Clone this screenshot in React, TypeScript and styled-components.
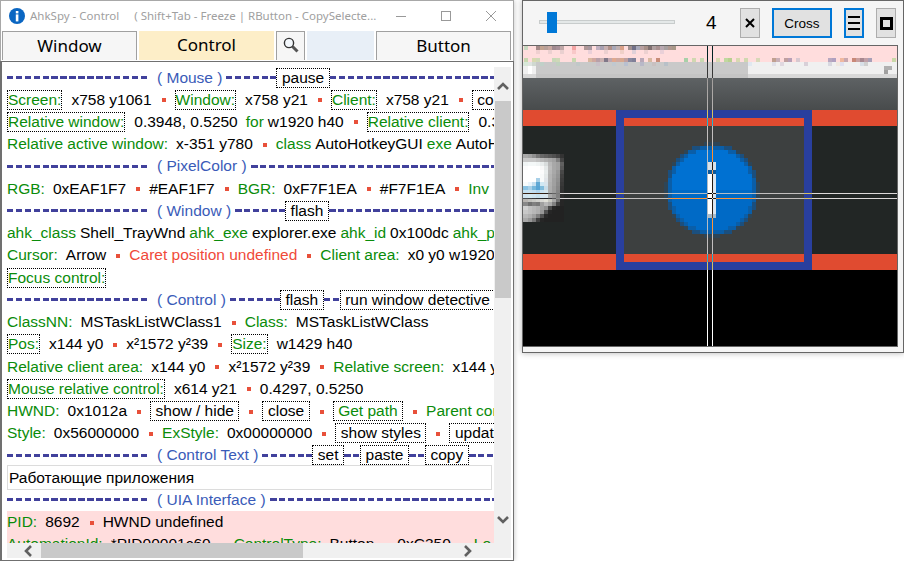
import React from 'react';
import styled, { createGlobalStyle } from 'styled-components';

const Global = createGlobalStyle`
  html, body { margin: 0; padding: 0; background: #fff; }
  body { width: 904px; height: 561px; overflow: hidden; }
  * { box-sizing: border-box; }
`;

// magnifier picture helpers, one cell is 4px on the screen
const OX = 523;
const OY = 46;

type Cell = [number, string];

const textRows: { y: number; cells: Cell[] }[] = [
  {
    y: 46,
    cells: [
      [524, '#c8d8c0'], [536, '#a58a88'], [540, '#c2a390'], [544, '#b8a098'], [548, '#c8a8a0'], [552, '#a08a90'],
      [556, '#a89098'], [560, '#c0a8a8'], [572, '#f4a4a4'], [584, '#b09898'], [588, '#a898a0'], [596, '#c0b0c0'],
      [600, '#a8a0b0'], [604, '#c8b0b0'], [608, '#b09088'], [612, '#a8a8b8'], [616, '#c0b0b0'], [620, '#d8a088'],
      [628, '#a09090'], [632, '#707088'], [636, '#a8a8b8'], [640, '#b8a0a0'], [644, '#a89088'], [648, '#807070'],
      [652, '#b0a0a0'], [656, '#a89090'], [660, '#b8a8b0'], [664, '#a8a0a0'], [668, '#b09890'], [672, '#a89888'],
    ],
  },
  {
    y: 50,
    cells: [
      [536, '#f0d0d0'], [548, '#ecd0d0'], [560, '#ead0d0'], [572, '#f8c8c8'], [588, '#ead0d8'], [604, '#ecd0d0'],
      [620, '#f0d0c8'], [632, '#e0d0d8'], [644, '#ecd0d0'], [660, '#ead0d8'],
    ],
  },
  {
    y: 58,
    cells: [
      [524, '#c8d8b0'], [532, '#d8d8b0'], [536, '#d0d8b8'], [552, '#c8d8b8'], [556, '#d0d8b8'], [572, '#c8d8b0'],
      [588, '#d8b8a0'], [592, '#d0a8a0'], [596, '#b8a0a8'], [600, '#c8b0b0'], [604, '#807888'], [608, '#c0a8b0'],
      [612, '#e0a890'], [616, '#d0a8a0'], [620, '#d8a890'], [624, '#c0a0a0'], [628, '#8888a0'], [632, '#808098'],
      [640, '#b8a8b8'], [648, '#d8b8a0'], [656, '#c88c78'], [684, '#a8d0a8'], [692, '#d0d8b0'], [700, '#c8d8b0'],
      [716, '#d8d8b0'], [724, '#c0d8a0'], [728, '#b8d090'], [736, '#d8d8b0'], [744, '#d0d8b0'], [756, '#d8d8b8'],
      [772, '#c0a090'], [776, '#c8b0b8'], [784, '#c0a0a0'], [788, '#b8a0b8'], [796, '#d8c8d0'], [828, '#b8a8c0'],
      [832, '#b0a0c0'], [840, '#f0b8a0'], [844, '#c8a8b0'], [852, '#c88878'], [856, '#c8a0a0'], [860, '#a88890'],
      [864, '#c0a0a8'], [868, '#a8a0b8'], [892, '#c8d8a8'],
    ],
  },
  {
    y: 62,
    cells: [
      [524, '#d8e8d8'], [532, '#d0d8d0'], [540, '#c0d0c8'], [556, '#c0d0c0'], [576, '#c0c8c8'], [596, '#c8c0c8'],
      [612, '#c0c8d0'], [624, '#b8c0d0'], [640, '#b8b8c8'], [652, '#c8c0c0'], [664, '#b8c0c8'], [748, '#e0e8f0'],
      [772, '#e0e0e8'], [780, '#e0d8e0'], [804, '#d8d0d8'], [828, '#d8d8e0'], [836, '#f0e8e0'], [840, '#e0e0f0'],
      [860, '#d8e0e8'], [864, '#d0d0d0'],
    ],
  },
];

const monitor: string[] = [
  'a8a8a8 a0a0a0 909090 787878 686868 606060 585858 505050 444444 333333',
  'c8c8c8 c8c8c8 c8c8c8 c0c0c0 b8b8b8 b0b0b0 a8a8a8 a0a0a0 808080 444444',
  'f0f4f4 f4f8f8 f4f8f8 f0f4f4 e8ecec d8dcdc b8b8b8 a8a8a8 a0a0a0 606060',
  'fcfcfc ffffff ffffff ffffff f8f8f8 e4e8e8 bcbcbc a8a8a8 a0a0a0 585858',
  'ffffff ffffff ffffff ffffff fcfcfc e8ecec b8b8b8 a8a8a8 989898 484848',
  'ffffff ffffff ffffff ffffff f8fafa e4e8e8 b4b4b4 a4a4a4 949494 404040',
  'ffffff ffffff ffffff a8d0e8 f8fafa e0e4e8 b4b4b4 a0a0a0 909090 3c3c3c',
  'f8fcfc e8f4fc c8e0f0 60a8d4 d0e8f4 d8e4ec b0b0b0 a0a0a0 8c8c8c 383838',
  '8cc4e4 a8d0e8 78b8dc 58a4d4 80bcdc c8dce8 aeaeae 9c9c9c 888888 343434',
  'c4e0f0 c8e0f0 c0dcf0 b0d4ec c8e0f0 d4e4ec acacac 9c9c9c 848484 303030',
  'd0e4f0 d4e8f0 d0e4f0 c8e0ec d4e4f0 d8e4ec aaaaaa 989898 808080 2c2c2c',
  'b8b4b0 c0c0bc c8c8c4 d0d0cc d8d8d4 e0e0d8 c8c8c0 a8a8a8 707070 262626',
  '888888 707070 808080 787878 a0a0a0 b8b8b8 a8a8a8 808080 404040 262626',
  'd0d0d0 c0c0c0 b8b8b8 b0b0b0 a0a0a0 909090 484848 262626 222222 222222',
  'c8c8c8 c0c0c0 b8b8b8 b0b0b0 989898 505050 262626 222222 222222 222222',
  'b8b8b8 b0b0b0 a0a0a0 808080 505050 282828 222222 222222 222222 222222',
  'a8a8a8 989898 787878 404040 262626 222222 222222 222222 222222 222222',
];

const Magnifier = () => {
  const circle: React.ReactNode[] = [];
  for (let y = 142; y < 238; y += 4) {
    for (let x = 664; x < 760; x += 4) {
      const d = Math.hypot(x + 2 - 712, y + 2 - 190);
      if (d > 47) continue;
      const color = d < 41.5 ? (y < 190 ? '#0071d2' : '#006ac6') : d < 44 ? '#0a5ea8' : d < 46 ? '#1b4f7e' : '#2e4556';
      circle.push(<rect key={`${x}-${y}`} x={x} y={y} width={4} height={4} fill={color} />);
    }
  }
  return (
    <Canvas viewBox={`${OX} ${OY} 374 300`} shapeRendering="crispEdges">
      <defs>
        <linearGradient id="bar" x1="0" y1="0" x2="0" y2="1">
          <stop offset="0" stopColor="#5e6264" />
          <stop offset="1" stopColor="#484b4c" />
        </linearGradient>
      </defs>
      <rect x={523} y={46} width={374} height={16} fill="#ffdddd" />
      <rect x={523} y={62} width={374} height={16} fill="#f0f0f0" />
      <rect x={536} y={62} width={212} height={12} fill="#c9c9c9" />
      <rect x={523} y={74} width={374} height={4} fill="#d8d8d8" />
      <rect x={536} y={74} width={212} height={4} fill="#c4c4c4" />
      <rect x={523} y={62} width={13} height={4} fill="#dfe4e0" />
      <rect x={528} y={66} width={4} height={8} fill="#ffffff" />
      <rect x={884} y={66} width={8} height={4} fill="#b0b0b0" />
      <rect x={884} y={70} width={4} height={4} fill="#a0a0a0" />
      {textRows.map((row) =>
        row.cells.map(([x, color]) => <rect key={`${row.y}-${x}`} x={x} y={row.y} width={4} height={4} fill={color} />)
      )}
      <rect x={523} y={78} width={374} height={32} fill="url(#bar)" />
      <rect x={523} y={110} width={374} height={16} fill="#e04b30" />
      <rect x={523} y={126} width={374} height={128} fill="#222625" />
      <rect x={523} y={254} width={374} height={16} fill="#e04b30" />
      <rect x={523} y={270} width={374} height={76} fill="#000000" />
      {monitor.map((row, r) =>
        row.split(' ').map((color, c) => (
          <rect
            key={`m-${r}-${c}`}
            x={c === 0 ? 523 : 524 + c * 4}
            y={154 + r * 4}
            width={c === 0 ? 5 : 4}
            height={4}
            fill={`#${color}`}
          />
        ))
      )}
      <rect x={616} y={110} width={196} height={160} fill="#293f9e" />
      <rect x={624} y={118} width={180} height={8} fill="#e04b30" />
      <rect x={624} y={126} width={180} height={128} fill="#3d4040" />
      <rect x={624} y={254} width={180} height={8} fill="#e04b30" />
      {circle}
      <rect x={708} y={162} width={8} height={8} fill="#d8e2ea" />
      <rect x={708} y={170} width={8} height={4} fill="#0d5a9c" />
      <rect x={708} y={174} width={4} height={40} fill="#ffffff" />
      <rect x={712} y={174} width={4} height={40} fill="#dbe6f0" />
      <rect x={708} y={214} width={8} height={4} fill="#a9bccb" />
      <InvertLine x={707} y={46} width={1} height={300} />
      <InvertLine x={712} y={46} width={1} height={300} />
      <InvertLine x={523} y={193} width={374} height={1} />
      <InvertLine x={523} y={198} width={374} height={1} />
      <rect x={707} y={146} width={1} height={47} fill="#b4bcc4" />
      <rect x={707} y={199} width={1} height={36} fill="#b4bcc4" />
      <rect x={668} y={193} width={39} height={1} fill="#b4bcc4" />
      <rect x={716} y={193} width={40} height={1} fill="#b4bcc4" />
    </Canvas>
  );
};

const Chevron = ({ dir }: { dir: 'up' | 'down' | 'left' | 'right' }) => {
  const points = {
    up: '1,8 6,3 11,8',
    down: '1,3 6,8 11,3',
    left: '8,1 3,6 8,11',
    right: '4,1 9,6 4,11',
  }[dir];
  return (
    <ChevronSvg viewBox="0 0 12 12">
      <polyline points={points} fill="none" stroke="#606060" strokeWidth="2.6" />
    </ChevronSvg>
  );
};

const Section = ({ title, parts, first = 142 }: { title: string; parts: (string | number)[]; first?: number }) => (
  <Row>
    <Dash $w={first} />
    <SectionTitle>{title}</SectionTitle>
    {parts.map((p, i) => (typeof p === 'number' ? <Dash key={i} $w={p} /> : <Btn key={i}>{p}</Btn>))}
    <Dash $grow />
  </Row>
);

const App = () => (
  <Page>
    <Global />
    <SpyWindow>
      <TitleBar>
        <svg width="16" height="16" viewBox="0 0 16 16">
          <circle cx="8" cy="8" r="8" fill="#0a66c2" />
          <rect x="6.8" y="3" width="2.6" height="2.4" fill="#fff" />
          <rect x="6.8" y="6.4" width="2.6" height="7" fill="#fff" />
        </svg>
        <TitleText>AhkSpy - Control</TitleText>
        <TitleHint>( Shift+Tab - Freeze | RButton - CopySelecte...</TitleHint>
        <WinButtons>
          <svg width="10" height="10" viewBox="0 0 10 10">
            <line x1="0" y1="5.5" x2="10" y2="5.5" stroke="#999" />
          </svg>
          <svg width="10" height="10" viewBox="0 0 10 10">
            <rect x="0.5" y="0.5" width="9" height="9" fill="none" stroke="#999" />
          </svg>
          <svg width="10" height="10" viewBox="0 0 10 10">
            <path d="M0 0 L10 10 M10 0 L0 10" stroke="#999" />
          </svg>
        </WinButtons>
      </TitleBar>
      <Tabs>
        <Tab $w={135} $bordered>Window</Tab>
        <Tab $w={135} $bg="#fdeec8">Control</Tab>
        <Tab $w={29} $bordered>
          <svg width="16" height="16" viewBox="0 0 16 16">
            <line x1="9.5" y1="9.5" x2="14.5" y2="14.5" stroke="#555" strokeWidth="3" />
            <circle cx="6" cy="6" r="4.6" fill="#f4f8fc" stroke="#333" strokeWidth="1.4" />
          </svg>
        </Tab>
        <Tab $w={67} $bg="#e8eff7" />
        <Tab $w={135} $bordered>Button</Tab>
      </Tabs>
      <Frame>
        <FrameTop>
          <ScrollBody>
            <Section title="( Mouse )" parts={[50, 'pause']} />
            <Row>
              <BoxLabel>Screen:</BoxLabel><Val>x758 y1061</Val><Dot />
              <BoxLabel>Window:</BoxLabel><Val>x758 y21</Val><Dot />
              <BoxLabel>Client:</BoxLabel><Val>x758 y21</Val><Dot />
              <Btn>con</Btn>
            </Row>
            <Row>
              <BoxLabel>Relative window:</BoxLabel><Val>0.3948, 0.5250</Val>
              <Label $ml={8}>for</Label><Word>w1920 h40</Word><Dot />
              <BoxLabel>Relative client:</BoxLabel><Val>0.3</Val>
            </Row>
            <Row>
              <Label>Relative active window:</Label><Val>x-351 y780</Val><Dot />
              <Label>class</Label><Word>AutoHotkeyGUI</Word>
              <Label $ml={4}>exe</Label><Word>AutoH</Word>
            </Row>
            <Section title="( PixelColor )" parts={[]} />
            <Row>
              <Label>RGB:</Label><Val>0xEAF1F7</Val><Dot /><Word $ml={0}>#EAF1F7</Word><Dot />
              <Label>BGR:</Label><Val>0xF7F1EA</Val><Dot /><Word $ml={0}>#F7F1EA</Word><Dot />
              <Label>Inv</Label>
            </Row>
            <Section title="( Window )" parts={[50, 'flash']} />
            <Row>
              <Label>ahk_class</Label><Word>Shell_TrayWnd</Word>
              <Label $ml={4}>ahk_exe</Label><Word>explorer.exe</Word>
              <Label $ml={4}>ahk_id</Label><Word>0x100dc</Word>
              <Label $ml={4}>ahk_p</Label>
            </Row>
            <Row>
              <Label>Cursor:</Label><Val>Arrow</Val><Dot />
              <Warn>Caret position undefined</Warn><Dot />
              <Label>Client area:</Label><Val>x0 y0 w1920</Val>
            </Row>
            <Row><BoxLabel>Focus control:</BoxLabel></Row>
            <Section title="( Control )" parts={[50, 'flash', 16, 'run window detective']} />
            <Row>
              <Label>ClassNN:</Label><Val>MSTaskListWClass1</Val><Dot />
              <Label>Class:</Label><Val>MSTaskListWClass</Val>
            </Row>
            <Row>
              <BoxLabel>Pos:</BoxLabel><Val>x144 y0</Val><Dot />
              <Word $ml={0}>x²1572 y²39</Word><Dot />
              <BoxLabel>Size:</BoxLabel><Val>w1429 h40</Val>
            </Row>
            <Row>
              <Label>Relative client area:</Label><Val>x144 y0</Val><Dot />
              <Word $ml={0}>x²1572 y²39</Word><Dot />
              <Label>Relative screen:</Label><Val>x144 y</Val>
            </Row>
            <Row>
              <BoxLabel>Mouse relative control:</BoxLabel><Val>x614 y21</Val><Dot />
              <Word $ml={0}>0.4297, 0.5250</Word>
            </Row>
            <Row>
              <Label>HWND:</Label><Val>0x1012a</Val><Dot />
              <Btn>show / hide</Btn><Dot />
              <Btn>close</Btn><Dot />
              <Btn $green>Get path</Btn><Dot />
              <Label>Parent con</Label>
            </Row>
            <Row>
              <Label>Style:</Label><Val>0x56000000</Val><Dot />
              <Label>ExStyle:</Label><Val>0x00000000</Val><Dot />
              <Btn>show styles</Btn><Dot />
              <Btn>update</Btn>
            </Row>
            <Section title="( Control Text )" parts={[50, 'set', 16, 'paste', 16, 'copy']} />
            <Row><TextField>Работающие приложения</TextField></Row>
            <Section title="( UIA Interface )" parts={[]} />
            <PinkBlock>
              <Row>
                <Label>PID:</Label><Val>8692</Val><Dot />
                <Word $ml={0}>HWND undefined</Word>
              </Row>
              <Row>
                <Label>AutomationId:</Label><Val>*PID00001c60</Val><Dot />
                <Label>ControlType:</Label><Val>Button</Val><Dot />
                <Word $ml={0}>0xC350</Word><Dot />
                <Label>Lo</Label>
              </Row>
            </PinkBlock>
          </ScrollBody>
          <VBar>
            <VArrowUp><Chevron dir="up" /></VArrowUp>
            <VThumb />
            <VArrowDown><Chevron dir="down" /></VArrowDown>
          </VBar>
        </FrameTop>
        <FrameBottom>
          <HBar>
            <HArrow $w={34}><Chevron dir="left" /></HArrow>
            <HThumb />
            <HArrow $w={176}><Chevron dir="right" /></HArrow>
          </HBar>
          <Corner />
        </FrameBottom>
      </Frame>
    </SpyWindow>
    <ZoomWindow>
      <ZoomBar>
        <Slider>
          <SliderThumb />
        </Slider>
        <ZoomValue>4</ZoomValue>
        <ToolBtn $w={20}>
          <svg width="10" height="10" viewBox="0 0 10 10">
            <path d="M1 1 L9 9 M9 1 L1 9" stroke="#000" strokeWidth="2" />
          </svg>
        </ToolBtn>
        <ToolBtn $w={60} $ml={12} $active>Cross</ToolBtn>
        <ToolBtn $w={20} $ml={12} $active>
          <svg width="12" height="14" viewBox="0 0 12 14">
            <path d="M0 1 H12 M0 7 H12 M0 13 H12" stroke="#000" strokeWidth="2" />
          </svg>
        </ToolBtn>
        <ToolBtn $w={20} $ml={12}>
          <svg width="13" height="13" viewBox="0 0 13 13">
            <rect x="1.5" y="1.5" width="10" height="10" fill="none" stroke="#000" strokeWidth="3" />
          </svg>
        </ToolBtn>
      </ZoomBar>
      <CanvasWrap>
        <Magnifier />
      </CanvasWrap>
    </ZoomWindow>
  </Page>
);

export default App;

const Page = styled.div`
  display: flex;
  align-items: flex-start;
  gap: 8px;
  width: 904px;
  height: 561px;
  font-family: 'Liberation Sans', Arial, sans-serif;
  overflow: hidden;
`;

const SpyWindow = styled.div`
  width: 514px;
  height: 561px;
  flex: none;
  display: flex;
  flex-direction: column;
  background: #fff;
  border-top: 1px solid #a8a8a8;
  box-shadow: 0 0 5px rgba(0, 0, 0, 0.25);
`;

const TitleBar = styled.div`
  height: 30px;
  flex: none;
  display: flex;
  align-items: center;
  padding: 0 0 1px 8px;
  border-left: 1px solid #a8a8a8;
  border-right: 1px solid #a8a8a8;
  font-family: 'Noto Sans', sans-serif;
  font-size: 11.5px;
  color: #a0a0a0;
`;

const TitleText = styled.span`
  margin-left: 5px;
  white-space: nowrap;
`;

const TitleHint = styled.span`
  margin-left: 15px;
  white-space: nowrap;
`;

const WinButtons = styled.div`
  margin-left: auto;
  margin-right: 17px;
  display: flex;
  align-items: center;
  gap: 35px;
`;

const Tabs = styled.div`
  height: 30px;
  flex: none;
  display: flex;
  gap: 2px;
  padding: 0 0 0 1px;
  border-left: 1px solid #a8a8a8;
  border-right: 1px solid #a8a8a8;
`;

const Tab = styled.div<{ $w: number; $bg?: string; $bordered?: boolean }>`
  width: ${(p) => p.$w}px;
  height: 29px;
  flex: none;
  display: flex;
  align-items: center;
  justify-content: center;
  padding-bottom: 2px;
  font-family: 'Noto Sans', sans-serif;
  font-size: 17px;
  color: #000;
  background: ${(p) => p.$bg || '#f6f6f6'};
  border: ${(p) => (p.$bordered ? '1px solid #a0a0a0' : 'none')};
  border-bottom: none;
`;

const Frame = styled.div`
  flex: 1;
  min-height: 0;
  display: flex;
  flex-direction: column;
  border: 1px solid #707070;
  border-left-width: 2px;
  padding: 4.4px 2px 2px 5px;
`;

const FrameTop = styled.div`
  flex: 1;
  min-height: 0;
  display: flex;
`;

const FrameBottom = styled.div`
  height: 15px;
  flex: none;
  display: flex;
`;

const ScrollBody = styled.div`
  flex: 1;
  min-width: 0;
  overflow: hidden;
  font-size: 15.5px;
  color: #000;
`;

const Row = styled.div`
  height: 22.24px;
  display: flex;
  align-items: center;
  white-space: nowrap;
  > * {
    flex: none;
  }
`;

const Dash = styled.span<{ $w?: number; $grow?: boolean }>`
  height: 3px;
  width: ${(p) => (p.$grow ? 'auto' : `${p.$w}px`)};
  flex: ${(p) => (p.$grow ? '1 1 0' : 'none')} !important;
  background: repeating-linear-gradient(90deg, #41419c 0 6.5px, transparent 6.5px 8.9px);
`;

const SectionTitle = styled.span`
  margin: 0 4px 0 8px;
  color: #3a5bb8;
`;

const Label = styled.span<{ $ml?: number }>`
  margin-left: ${(p) => p.$ml || 0}px;
  color: #0a8c0a;
`;

const BoxLabel = styled.span`
  height: 20px;
  line-height: 18px;
  margin-right: 1px;
  border: 1px dotted #000;
  color: #0a8c0a;
`;

const Btn = styled.span<{ $green?: boolean }>`
  height: 20px;
  line-height: 18px;
  padding: 0 4.5px;
  border: 1px dotted #000;
  color: ${(p) => (p.$green ? '#0a8c0a' : '#000')};
`;

const Val = styled.span`
  margin-left: 8px;
`;

const Word = styled.span<{ $ml?: number }>`
  margin-left: ${(p) => (p.$ml === undefined ? 4 : p.$ml)}px;
`;

const Warn = styled.span`
  color: #f04a3a;
`;

const Dot = styled.span`
  width: 4px;
  height: 4px;
  margin: 1px 9px 0 10px;
  background: #e8503a;
`;

const TextField = styled.div`
  width: 485px;
  height: 25px;
  line-height: 23px;
  padding-left: 1px;
  border: 1px solid #dcdcdc;
  white-space: nowrap;
`;

const PinkBlock = styled.div`
  background: #ffdddd;
`;

const VBar = styled.div`
  width: 17px;
  flex: none;
  margin-top: 0.6px;
  background: #f0f0f0;
  display: flex;
  flex-direction: column;
  align-items: center;
`;

const VArrowUp = styled.div`
  height: 34px;
  padding-top: 14px;
  flex: none;
`;

const VThumb = styled.div`
  width: 16px;
  height: 197px;
  margin-left: 1px;
  flex: none;
  background: #c9c9c9;
`;

const VArrowDown = styled.div`
  margin-top: 216px;
  flex: none;
`;

const HBar = styled.div`
  flex: 1;
  min-width: 0;
  background: #f0f0f0;
  display: flex;
  align-items: center;
`;

const HArrow = styled.div<{ $w: number }>`
  width: ${(p) => p.$w}px;
  flex: none;
  display: flex;
  justify-content: flex-end;
  padding-right: 6px;
`;

const HThumb = styled.div`
  width: 262px;
  height: 15px;
  flex: none;
  background: #c9c9c9;
`;

const Corner = styled.div`
  width: 17px;
  flex: none;
  background: #f0f0f0;
`;

const ChevronSvg = styled.svg`
  display: block;
  width: 12px;
  height: 12px;
`;

const ZoomWindow = styled.div`
  width: 382px;
  height: 353px;
  flex: none;
  display: flex;
  flex-direction: column;
  background: #f5f5f5;
  border: 1px solid #666;
  box-shadow: 0 0 6px rgba(0, 0, 0, 0.3);
`;

const ZoomBar = styled.div`
  height: 44px;
  flex: none;
  display: flex;
  align-items: center;
  padding: 0 0 0 16px;
`;

const Slider = styled.div`
  position: relative;
  width: 136px;
  height: 4px;
  margin-top: -3px;
  flex: none;
  background: #e4e8e8;
  border: 1px solid #c8cccc;
`;

const SliderThumb = styled.div`
  position: absolute;
  left: 7px;
  top: -9px;
  width: 10px;
  height: 21px;
  background: #0078d7;
`;

const ZoomValue = styled.div`
  width: 65px;
  padding-left: 31px;
  flex: none;
  font-size: 19px;
  color: #000;
`;

const ToolBtn = styled.div<{ $w: number; $ml?: number; $active?: boolean }>`
  width: ${(p) => p.$w}px;
  height: 30px;
  margin-left: ${(p) => p.$ml || 0}px;
  flex: none;
  display: flex;
  align-items: center;
  justify-content: center;
  font-size: 13.5px;
  color: #000;
  background: #e1e1e1;
  border: ${(p) => (p.$active ? '2px solid #0078d7' : '1px solid #adadad')};
`;

const CanvasWrap = styled.div`
  width: 375px;
  height: 302px;
  flex: none;
  border: 1px solid #666;
  border-left: none;
`;

const Canvas = styled.svg`
  display: block;
  width: 374px;
  height: 300px;
  isolation: isolate;
`;

const InvertLine = styled.rect`
  fill: #fff;
  mix-blend-mode: difference;
`;
